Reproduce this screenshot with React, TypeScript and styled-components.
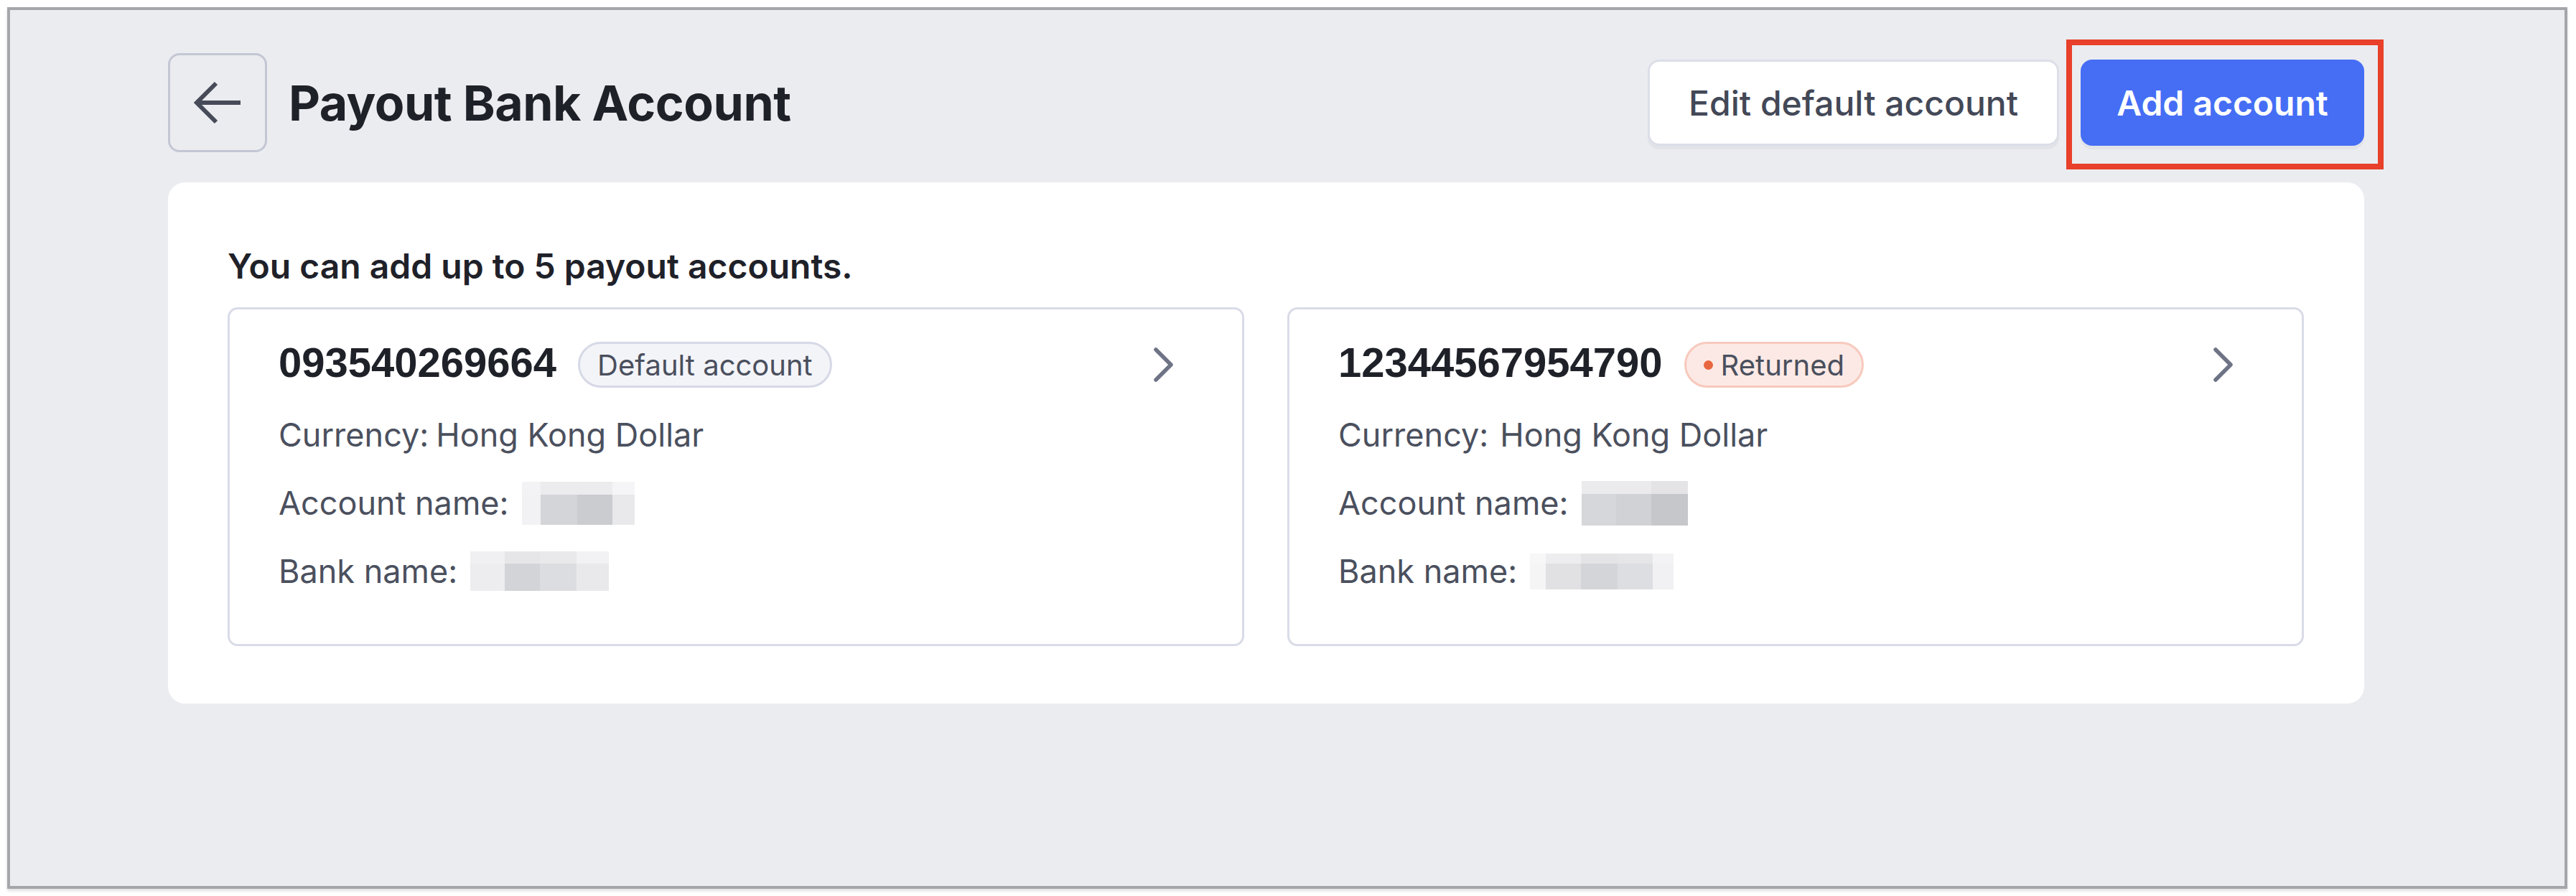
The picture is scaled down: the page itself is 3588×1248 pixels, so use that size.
import React from "react";
import styled, { createGlobalStyle, css } from "styled-components";

const GlobalStyle = createGlobalStyle`
  html, body {
    margin: 0;
    padding: 0;
    background: #ffffff;
    font-family: Inter, "Noto Sans", "Liberation Sans", sans-serif;
  }
  * { box-sizing: border-box; }
`;

const Frame = styled.div`
  margin: 10px 12px 10px 10px;
  height: 1228px;
  border: 4px solid #a5a6aa;
  background: #ebecf0;
  padding: 60px 0 0 220px;
  box-shadow: 0 3px 4px rgba(0, 0, 0, 0.12);
`;

const Content = styled.div`
  width: 3059px;
`;

const Header = styled.header`
  display: flex;
  align-items: center;
  height: 138px;
`;

const BackButton = styled.button`
  width: 138px;
  height: 138px;
  border: 3px solid #c3c7d4;
  border-radius: 16px;
  background: transparent;
  display: flex;
  align-items: center;
  justify-content: center;
  padding: 0;
  cursor: pointer;
`;

const Title = styled.h1`
  margin: 0 0 0 30px;
  font-size: 68px;
  font-weight: 700;
  color: #1f2129;
  letter-spacing: -0.5px;
`;

const Actions = styled.div`
  margin-left: auto;
  display: flex;
  align-items: center;
  gap: 30px;
`;

const ButtonBase = css`
  height: 120px;
  border-radius: 16px;
  font-family: Inter, "Liberation Sans", sans-serif;
  font-size: 48px;
  white-space: nowrap;
  cursor: pointer;
  box-shadow: 0 5px 0 rgba(40, 50, 90, 0.05);
`;

const EditButton = styled.button`
  ${ButtonBase};
  padding: 0 54px;
  background: #ffffff;
  border: 3px solid #dcdee8;
  color: #434857;
  font-weight: 500;
`;

const AddWrap = styled.div`
  position: relative;
  display: flex;
`;

const AddButton = styled.button`
  ${ButtonBase};
  width: 395px;
  padding: 0;
  background: #456ef5;
  border: none;
  color: #ffffff;
  font-weight: 600;
`;

const Highlight = styled.div`
  position: absolute;
  left: -20px;
  top: -28px;
  right: -27px;
  bottom: -33px;
  border: 8px solid #e8402a;
  pointer-events: none;
`;

const Panel = styled.section`
  margin-top: 42px;
  background: #ffffff;
  border-radius: 24px;
  padding: 88px 84px 80px 83px;
`;

const Intro = styled.p`
  margin: 0;
  font-size: 48px;
  line-height: 58px;
  font-weight: 600;
  color: #1f2129;
`;

const Grid = styled.div`
  margin-top: 28px;
  display: grid;
  grid-template-columns: 1fr 1fr;
  gap: 60px;
`;

const AccountCard = styled.div`
  height: 472px;
  border: 3px solid #d9dce7;
  border-radius: 14px;
  padding: 45px 94px 0 68px;
`;

const TopRow = styled.div`
  display: flex;
  align-items: center;
  height: 64px;
  gap: 30px;
`;

const Number = styled.span`
  font-family: "Liberation Sans", Arial, sans-serif;
  font-size: 58px;
  font-weight: 700;
  color: #1f2129;
  line-height: 64px;
  margin-top: -6px;
`;

const Badge = styled.span<{ $tone: "neutral" | "danger" }>`
  height: 64px;
  display: inline-flex;
  align-items: center;
  gap: 11px;
  padding: 0 24px;
  border-radius: 32px;
  font-size: 40px;
  color: #4a4f5d;
  ${(p) =>
    p.$tone === "danger"
      ? css`
          background: #fce9e5;
          border: 3px solid #f7c9bd;
        `
      : css`
          background: #f3f4f8;
          border: 3px solid #d6d9e6;
        `}
`;

const Dot = styled.span`
  width: 13px;
  height: 13px;
  border-radius: 50%;
  background: #e8673f;
`;

const Chevron = styled.svg`
  margin-left: auto;
  flex: none;
`;

const Details = styled.div`
  margin-top: 18px;
`;

const Line = styled.div`
  display: flex;
  align-items: center;
  height: 95px;
  font-size: 45px;
  color: #4b505e;
`;

const Mosaic = styled.div<{ $cols: string; $rows: string }>`
  display: grid;
  grid-template-columns: ${(p) => p.$cols};
  grid-template-rows: ${(p) => p.$rows};
  margin-left: 18px;
`;

const Cell = styled.span<{ $c: string }>`
  background: ${(p) => p.$c};
`;

type MosaicData = { cols: number[]; rows: number[]; colors: string[][] };

const Blur = ({ data }: { data: MosaicData }) => (
  <Mosaic
    $cols={data.cols.map((c) => `${c}px`).join(" ")}
    $rows={data.rows.map((r) => `${r}px`).join(" ")}
  >
    {data.colors.flatMap((row, ri) =>
      row.map((c, ci) => <Cell key={`${ri}-${ci}`} $c={c} />)
    )}
  </Mosaic>
);

const accounts: {
  number: string;
  badge: { text: string; tone: "neutral" | "danger" };
  currencyGap: boolean;
  name: MosaicData;
  bank: MosaicData;
}[] = [
  {
    number: "093540269664",
    badge: { text: "Default account", tone: "neutral" },
    currencyGap: false,
    name: {
      cols: [26, 51, 49, 31],
      rows: [18, 42],
      colors: [
        ["#f3f3f5", "#ececef", "#ececef", "#f5f5f7"],
        ["#f2f2f4", "#d4d5d9", "#cbccd0", "#e9e9ec"],
      ],
    },
    bank: {
      cols: [48, 49, 51, 45],
      rows: [17, 38],
      colors: [
        ["#f0f0f2", "#e6e6e9", "#e9e9ec", "#f2f2f4"],
        ["#ededf0", "#d3d4d8", "#dcdde0", "#e9e9ec"],
      ],
    },
  },
  {
    number: "12344567954790",
    badge: { text: "Returned", tone: "danger" },
    currencyGap: true,
    name: {
      cols: [48, 49, 51],
      rows: [18, 44],
      colors: [
        ["#ebebee", "#ebebee", "#e4e4e7"],
        ["#d6d7db", "#d1d2d6", "#c6c7cb"],
      ],
    },
    bank: {
      cols: [22, 49, 51, 49, 29],
      rows: [14, 36],
      colors: [
        ["#f7f7f8", "#ededf0", "#e4e4e7", "#e6e6e9", "#f3f3f5"],
        ["#f5f5f6", "#e1e1e4", "#d4d5d9", "#dddee1", "#f1f1f3"],
      ],
    },
  },
];

const CurrencyValue = styled.span<{ $gap: boolean }>`
  margin-left: ${(p) => (p.$gap ? "16px" : "10px")};
`;

export default function App() {
  return (
    <>
      <GlobalStyle />
      <Frame>
        <Content>
          <Header>
            <BackButton aria-label="Back">
              <svg width="66" height="60" viewBox="0 0 66 60" fill="none">
                <path
                  d="M31 3 L4 30 L31 57 M4 30 L65 30"
                  stroke="#474b59"
                  strokeWidth="6"
                  strokeLinejoin="miter"
                />
              </svg>
            </BackButton>
            <Title>Payout Bank Account</Title>
            <Actions>
              <EditButton>Edit default account</EditButton>
              <AddWrap>
                <AddButton>Add account</AddButton>
                <Highlight />
              </AddWrap>
            </Actions>
          </Header>
          <Panel>
            <Intro>You can add up to 5 payout accounts.</Intro>
            <Grid>
              {accounts.map((a) => (
                <AccountCard key={a.number}>
                  <TopRow>
                    <Number>{a.number}</Number>
                    <Badge $tone={a.badge.tone}>
                      {a.badge.tone === "danger" && <Dot />}
                      {a.badge.text}
                    </Badge>
                    <Chevron width="30" height="50" viewBox="0 0 30 50" fill="none">
                      <path
                        d="M4 4 L25 25 L4 46"
                        stroke="#6e7385"
                        strokeWidth="5.5"
                        strokeLinecap="round"
                        strokeLinejoin="round"
                      />
                    </Chevron>
                  </TopRow>
                  <Details>
                    <Line>
                      Currency:
                      <CurrencyValue $gap={a.currencyGap}>Hong Kong Dollar</CurrencyValue>
                    </Line>
                    <Line>
                      Account name:
                      <Blur data={a.name} />
                    </Line>
                    <Line>
                      Bank name:
                      <Blur data={a.bank} />
                    </Line>
                  </Details>
                </AccountCard>
              ))}
            </Grid>
          </Panel>
        </Content>
      </Frame>
    </>
  );
}
